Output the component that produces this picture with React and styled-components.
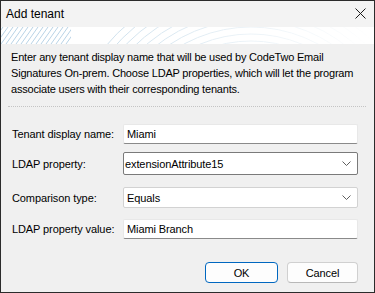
import React from "react";
import styled, { createGlobalStyle } from "styled-components";

const Global = createGlobalStyle`
  html, body { margin: 0; padding: 0; background: #f0f0f0; }
  * { box-sizing: border-box; }
`;

const Window = styled.div`
  width: 375px;
  height: 293px;
  border: 1px solid #2b2b2b;
  background: #f0f0f0;
  font-family: "Liberation Sans", Arial, sans-serif;
  font-size: 11px;
  letter-spacing: -0.1px;
  color: #000;
  display: flex;
  flex-direction: column;
  overflow: hidden;
`;

const TitleBar = styled.div`
  flex-shrink: 0;
  height: 26px;
  background: #f3f3f3;
  display: flex;
  align-items: center;
  justify-content: space-between;
  padding: 0 7px 1px 5px;
`;

const Title = styled.span`
  font-size: 12px;
  letter-spacing: 0;
`;

const CloseBtn = styled.div`
  width: 14px;
  height: 14px;
  display: flex;
  align-items: center;
  justify-content: center;
`;

const Banner = styled.div`
  flex-shrink: 0;
  height: 17px;
  background: #ffffff;
  position: relative;
  overflow: hidden;
`;

const Body = styled.div`
  flex: 1;
  display: flex;
  flex-direction: column;
  padding: 0 7px 0 10px;
`;

const Description = styled.p`
  margin: 5px 0 0 0;
  line-height: 16px;
  font-size: 11px;
  letter-spacing: -0.2px;
  white-space: nowrap;
`;

const Separator = styled.div`
  margin: 9px 1px 0 -3px;
  border-top: 1px dotted #c4c4c4;
`;

const Form = styled.div`
  display: flex;
  flex-direction: column;
  margin-top: 17px;
`;

const Row = styled.div`
  display: grid;
  grid-template-columns: 112px 235px;
  align-items: center;
  margin-top: ${p => p.$gap || 0}px;
`;

const Label = styled.label`
  padding-left: 1px;
  white-space: nowrap;
`;

const TextBox = styled.div`
  height: 20px;
  background: #fff;
  border: 1px solid #e8e8e8;
  border-bottom: 1px solid #8a8a8a;
  border-radius: 2px;
  padding-left: 3px;
  display: flex;
  align-items: center;
`;

const Select = styled.div`
  height: ${p => (p.$focused ? "23px" : "21px")};
  background: #fff;
  border: 1px solid ${p => (p.$focused ? "#7a7a7a" : "#d2d2d2")};
  border-radius: 2px;
  padding-left: ${p => (p.$focused ? "1px" : "3px")};
  padding-right: 6px;
  display: flex;
  align-items: center;
  justify-content: space-between;
`;

const Buttons = styled.div`
  display: flex;
  justify-content: flex-end;
  gap: 9px;
  margin-top: 23px;
  padding-right: 9px;
`;

const Button = styled.div`
  width: ${p => (p.$primary ? "73px" : "71px")};
  height: 21px;
  border-radius: 4px;
  border: 1px solid ${p => (p.$primary ? "#0067c0" : "#d0d0d0")};
  border-bottom-color: ${p => (p.$primary ? "#0067c0" : "#b8b8b8")};
  background: #fdfdfd;
  display: flex;
  align-items: center;
  justify-content: center;
`;

const Chevron = () => (
  <svg width="9" height="5" viewBox="0 0 9 5">
    <path d="M0.5 0.5 L4.5 4.5 L8.5 0.5" fill="none" stroke="#5f5f5f" strokeWidth="1" />
  </svg>
);

const BannerArt = () => {
  const lines = [];
  for (let i = -4; i < 14; i++) {
    const x = i * 5;
    lines.push(
      <line key={"l" + i} x1={x} y1={17} x2={x + 12} y2={0} stroke="#b9d3e6" strokeWidth="1" />
    );
  }
  const arcs = [];
  for (let i = 0; i < 18; i++) {
    const r = 70 + i * 7;
    arcs.push(
      <circle key={"c" + i} cx={250} cy={140} r={r} fill="none" stroke="#c7dcea" strokeWidth="1" />
    );
  }
  return (
    <svg width="373" height="17" viewBox="0 0 373 17" style={{ position: "absolute", left: 0, top: 0 }}>
      <defs>
        <linearGradient id="fade" x1="0" x2="1" y1="0" y2="0">
          <stop offset="0" stopColor="#fff" stopOpacity="1" />
          <stop offset="0.2" stopColor="#fff" stopOpacity="1" />
          <stop offset="0.65" stopColor="#fff" stopOpacity="0.35" />
          <stop offset="1" stopColor="#fff" stopOpacity="0" />
        </linearGradient>
        <mask id="m">
          <rect x="0" y="0" width="373" height="17" fill="url(#fade)" />
        </mask>
        <clipPath id="left"><rect x="0" y="0" width="70" height="17" /></clipPath>
        <clipPath id="right"><rect x="60" y="0" width="313" height="17" /></clipPath>
      </defs>
      <g mask="url(#m)">
        <g clipPath="url(#left)">{lines}</g>
        <g clipPath="url(#right)">{arcs}</g>
      </g>
    </svg>
  );
};

export default function App() {
  return (
    <>
      <Global />
      <Window>
        <TitleBar>
          <Title>Add tenant</Title>
          <CloseBtn>
            <svg width="11" height="11" viewBox="0 0 11 11">
              <path d="M0.5 0.5 L10.5 10.5 M10.5 0.5 L0.5 10.5" stroke="#1a1a1a" strokeWidth="1" />
            </svg>
          </CloseBtn>
        </TitleBar>
        <Banner>
          <BannerArt />
        </Banner>
        <Body>
          <Description>
            Enter any tenant display name that will be used by CodeTwo Email
            <br />
            Signatures On-prem. Choose LDAP properties, which will let the program
            <br />
            associate users with their corresponding tenants.
          </Description>
          <Separator />
          <Form>
            <Row>
              <Label>Tenant display name:</Label>
              <TextBox>Miami</TextBox>
            </Row>
            <Row $gap={8}>
              <Label>LDAP property:</Label>
              <Select $focused>
                <span>extensionAttribute15</span>
                <Chevron />
              </Select>
            </Row>
            <Row $gap={12}>
              <Label>Comparison type:</Label>
              <Select>
                <span>Equals</span>
                <Chevron />
              </Select>
            </Row>
            <Row $gap={11}>
              <Label>LDAP property value:</Label>
              <TextBox>Miami Branch</TextBox>
            </Row>
          </Form>
          <Buttons>
            <Button $primary>OK</Button>
            <Button>Cancel</Button>
          </Buttons>
        </Body>
      </Window>
    </>
  );
}
